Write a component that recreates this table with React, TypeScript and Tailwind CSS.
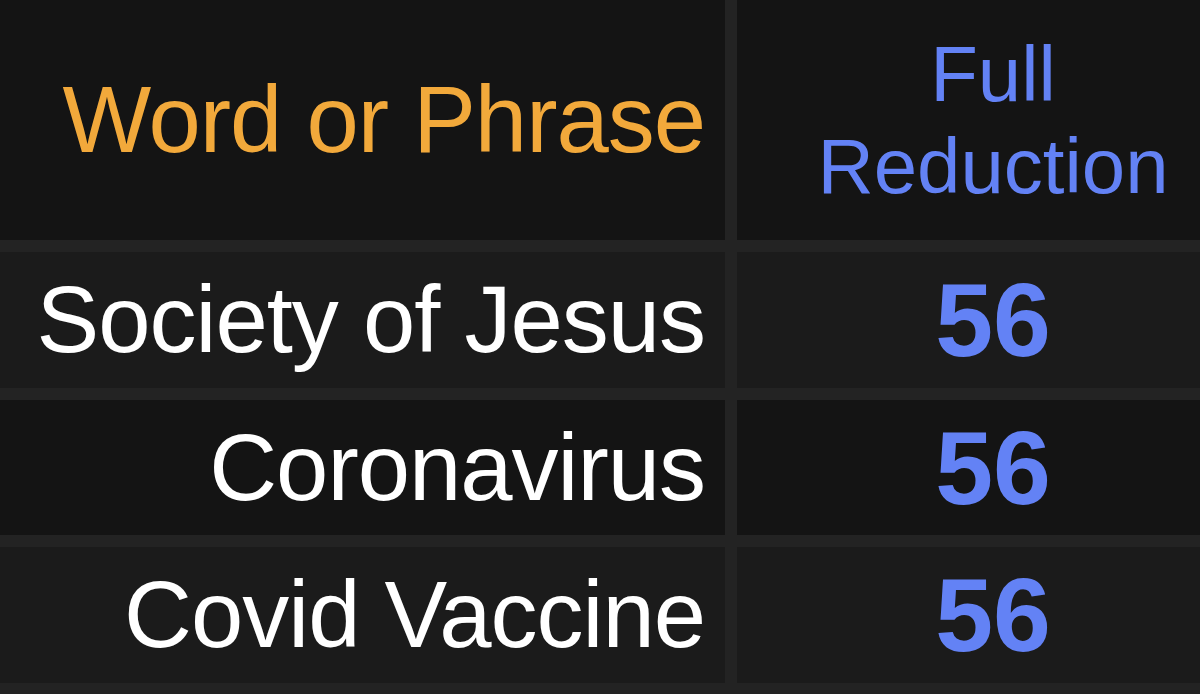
import React from 'react';

const rows = [
  { phrase: 'Society of Jesus', value: 56 },
  { phrase: 'Coronavirus', value: 56 },
  { phrase: 'Covid Vaccine', value: 56 },
];

const App: React.FC = () => {
  return (
    <div className="w-[1200px] h-[694px] overflow-hidden bg-[#232323] font-['Liberation_Sans',Arial,sans-serif]">
      <div className="grid grid-cols-[725px_512px] grid-rows-[240px_136px_135px_136px] gap-x-[12px] gap-y-[12px] w-[1249px]">
        {/* Header */}
        <div className="bg-[#141414] flex items-center justify-end pr-[20px]">
          <span className="text-[94px] leading-none tracking-[-1px] text-[#f2a93b]">Word or Phrase</span>
        </div>
        <div className="bg-[#141414] flex items-center justify-center">
          <span className="text-[78px] leading-[92px] text-[#6382f5] text-center">
            Full
            <br />
            Reduction
          </span>
        </div>

        {rows.map((row, i) => (
          <React.Fragment key={row.phrase}>
            <div className={`${i % 2 === 0 ? 'bg-[#1b1b1b]' : 'bg-[#141414]'} flex items-center justify-end pr-[20px]`}>
              <span className="text-[94px] leading-none tracking-[-1px] text-white">{row.phrase}</span>
            </div>
            <div className={`${i % 2 === 0 ? 'bg-[#1b1b1b]' : 'bg-[#141414]'} flex items-center justify-center`}>
              <span className="text-[104px] leading-none font-bold text-[#6382f5]">{row.value}</span>
            </div>
          </React.Fragment>
        ))}
      </div>
    </div>
  );
};

export default App;
